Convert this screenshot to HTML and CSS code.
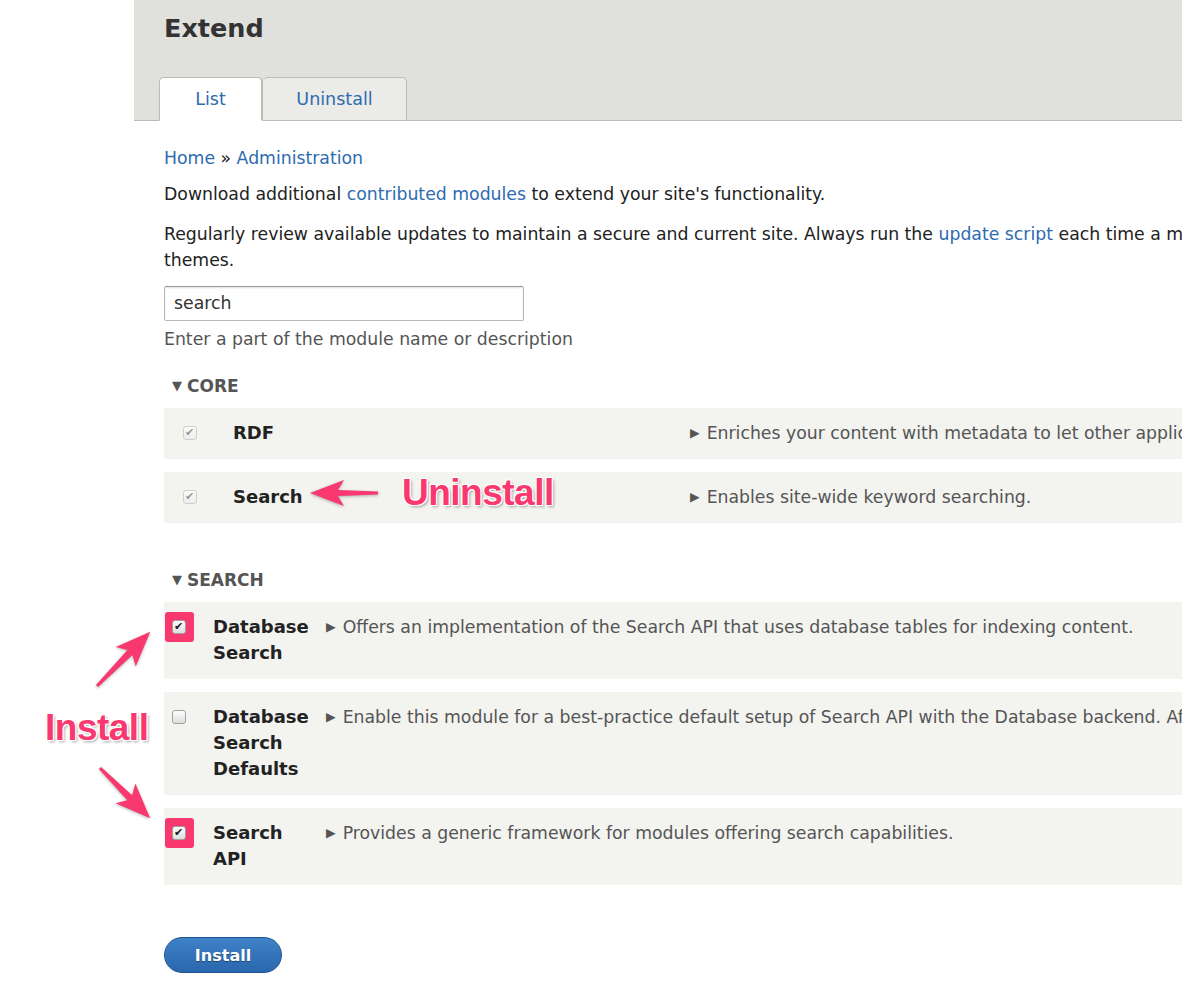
FILE: index.html
```html
<!DOCTYPE html>
<html lang="en">
<head>
<meta charset="utf-8">
<title>Extend</title>
<link rel="stylesheet" href="styles.css">
</head>
<body>
<div class="page">
  <header class="header">
    <h1 class="title">Extend</h1>
    <nav class="tabs">
      <a class="tab active" href="#">List</a>
      <a class="tab" href="#">Uninstall</a>
    </nav>
  </header>
  <main class="content">
    <div class="breadcrumb"><a href="#">Home</a> » <a href="#">Administration</a></div>
    <p class="text">Download additional <a href="#">contributed modules</a> to extend your site's functionality.</p>
    <p class="text wide">Regularly review available updates to maintain a secure and current site. Always run the <a href="#">update script</a> each time a module is updated, for both modules and themes.</p>
    <div class="filter">
      <div class="input">search</div>
      <div class="hint">Enter a part of the module name or description</div>
    </div>

    <section class="group">
      <h2 class="group-title"><span class="tri">▼</span>CORE</h2>
      <div class="rows core">
        <div class="row">
          <div class="cb-cell"><span class="cb disabled checked"></span></div>
          <div class="name">RDF</div>
          <div class="desc"><span class="arrow">▶</span>Enriches your content with metadata to let other applications (e.g. search engines, aggregators) better understand its relationships and attributes.</div>
        </div>
        <div class="row">
          <div class="cb-cell"><span class="cb disabled checked"></span></div>
          <div class="name">Search</div>
          <div class="desc"><span class="arrow">▶</span>Enables site-wide keyword searching.</div>
        </div>
      </div>
    </section>

    <section class="group">
      <h2 class="group-title"><span class="tri">▼</span>SEARCH</h2>
      <div class="rows search">
        <div class="row">
          <div class="cb-cell"><span class="mark"><span class="cb checked"></span></span></div>
          <div class="name">Database Search</div>
          <div class="desc"><span class="arrow">▶</span>Offers an implementation of the Search API that uses database tables for indexing content.</div>
        </div>
        <div class="row">
          <div class="cb-cell"><span class="cb"></span></div>
          <div class="name">Database Search Defaults</div>
          <div class="desc"><span class="arrow">▶</span>Enable this module for a best-practice default setup of Search API with the Database backend. After installation it can be safely uninstalled.</div>
        </div>
        <div class="row">
          <div class="cb-cell"><span class="mark"><span class="cb checked"></span></span></div>
          <div class="name">Search API</div>
          <div class="desc"><span class="arrow">▶</span>Provides a generic framework for modules offering search capabilities.</div>
        </div>
      </div>
    </section>

    <div class="actions"><button class="btn" type="button">Install</button></div>
  </main>
</div>

<svg class="annotations" width="1182" height="1006" viewBox="0 0 1182 1006" aria-hidden="true">
  <g fill="#f8386f">
    <g transform="translate(378 493) rotate(180)">
      <path d="M0,-1.5 L40,-3 L34,-13 L68,0 L34,13 L40,3 L0,1.5 Z"/>
    </g>
    <g transform="translate(97 686) rotate(-45.5)">
      <path d="M0,-1.5 L47,-3.5 L41,-14 L76,0 L41,14 L47,3.5 L0,1.5 Z"/>
    </g>
    <g transform="translate(100 768) rotate(45)">
      <path d="M0,-1.5 L42,-3.5 L36,-14 L71,0 L36,14 L42,3.5 L0,1.5 Z"/>
    </g>
  </g>
</svg>
<div class="note note-uninstall">Uninstall</div>
<div class="note note-install">Install</div>
</body>
</html>
```

FILE: styles.css
```css
html, body {
  margin: 0;
  padding: 0;
}
body {
  width: 1182px;
  height: 1006px;
  overflow: hidden;
  position: relative;
  background: #fff;
  font-family: "DejaVu Sans", "Liberation Sans", sans-serif;
  font-size: 17.3px;
  color: #222;
}
a {
  color: #2e6bb0;
  text-decoration: none;
}
.page {
  margin-left: 134px;
  width: 1500px;
}
.header {
  background: #e0e0dc;
  border-bottom: 1px solid #bdbdb8;
  height: 121px;
  box-sizing: border-box;
  padding-left: 30px;
  display: flex;
  flex-direction: column;
  justify-content: space-between;
}
.title {
  margin: 0;
  padding-top: 10px;
  font-size: 25.5px;
  line-height: 36px;
  font-weight: bold;
  color: #333;
}
.tabs {
  display: flex;
  margin-left: -5px;
  margin-bottom: -1px;
}
.tab {
  display: flex;
  align-items: center;
  justify-content: center;
  height: 44px;
  box-sizing: border-box;
  border: 1px solid #bdbdb8;
  border-radius: 5px 5px 0 0;
  background: #ebebe8;
  font-size: 17.5px;
  color: #2e6bb0;
}
.tab.active {
  width: 104px;
  background: #fff;
  border-bottom-color: #fff;
  border-width: 1px 2px 1px 1px;
}
.tab + .tab {
  width: 144px;
  border-left: none;
}
.content {
  padding-left: 30px;
  width: 1380px;
}
.breadcrumb {
  margin-top: 24px;
  line-height: 26px;
}
.text {
  margin: 10px 0 0;
  line-height: 26px;
}
.text.wide {
  margin-top: 14px;
}
.filter {
  margin-top: 13px;
}
.input {
  width: 360px;
  height: 35px;
  box-sizing: border-box;
  border: 1px solid #b8b8b4;
  border-top-color: #9a9a96;
  border-radius: 2px;
  box-shadow: inset 0 1px 2px rgba(0, 0, 0, 0.12);
  padding: 0 9px;
  line-height: 33px;
  font-size: 17.3px;
  color: #333;
}
.hint {
  line-height: 26px;
  margin-top: 5px;
  color: #555;
}
.group {
  margin-top: 21px;
}
.group + .group {
  margin-top: 44px;
}
.group-title {
  margin: 0 0 9px 8px;
  font-size: 17px;
  line-height: 26px;
  font-weight: bold;
  color: #555;
}
.tri {
  display: inline-block;
  font-size: 13px;
  line-height: 1;
  margin-right: 5px;
  vertical-align: 2px;
}
.rows {
  display: flex;
  flex-direction: column;
  gap: 13px;
}
.row {
  display: grid;
  background: #f3f3f0;
  padding: 12px 0 13px;
  line-height: 26px;
}
.core .row {
  grid-template-columns: 69px 457px 1fr;
}
.search .row {
  grid-template-columns: 49px 113px 1fr;
}
.cb-cell {
  display: flex;
  justify-content: flex-start;
  align-items: flex-start;
  padding-top: 6px;
}
.core .cb-cell {
  padding-left: 19px;
}
.search .cb-cell {
  padding-left: 1px;
}
.cb {
  display: block;
  width: 14px;
  height: 14px;
  box-sizing: border-box;
  border: 1px solid #a0a0a0;
  border-radius: 3px;
  background: linear-gradient(#fdfdfd, #dedede);
  position: relative;
}
.search .cb {
  margin-left: 7px;
}
.cb.checked::after {
  content: "✔";
  position: absolute;
  left: 1px;
  top: -5px;
  font-size: 11px;
  line-height: 22px;
  color: #222;
}
.cb.disabled {
  border-color: #cfcfcf;
  background: linear-gradient(#fafafa, #ededed);
}
.cb.disabled::after {
  color: #9a9a9a;
}
.mark {
  display: block;
  width: 29px;
  height: 30px;
  box-sizing: border-box;
  margin-top: -8px;
  background: #f8386f;
  border-radius: 3px;
  padding-top: 8px;
}
.mark .cb {
  margin-left: 7px;
}
.name {
  font-weight: bold;
  font-size: 18px;
  color: #222;
}
.search .name {
  padding-right: 10px;
}
.desc {
  color: #555;
  white-space: nowrap;
}
.arrow {
  display: inline-block;
  font-size: 12.5px;
  line-height: 1;
  margin-right: 7px;
  vertical-align: 2px;
}
.actions {
  margin-top: 52px;
}
.btn {
  width: 118px;
  height: 36px;
  border: 1px solid #1f5592;
  border-radius: 18px;
  background: linear-gradient(#3f82c8, #2a66ad);
  color: #fff;
  font-family: "DejaVu Sans", sans-serif;
  font-weight: bold;
  font-size: 16px;
  text-shadow: 0 1px 1px rgba(0, 0, 0, 0.4);
  padding: 0;
}
.annotations {
  position: absolute;
  left: 0;
  top: 0;
  pointer-events: none;
  filter: drop-shadow(0 1px 1.5px rgba(0, 0, 0, 0.3));
}
.note {
  position: absolute;
  font-family: "Liberation Sans", Arial, sans-serif;
  font-weight: bold;
  font-size: 37px;
  line-height: 40px;
  color: #f8386f;
  letter-spacing: -0.5px;
  text-shadow: 0 0 1px #fff, 0 0 2px #fff, 1px 1px 0 #fff, -1px -1px 0 #fff, 1px -1px 0 #fff, -1px 1px 0 #fff, 2px 2px 3px rgba(0, 0, 0, 0.35);
}
.note-uninstall {
  left: 402px;
  top: 473px;
}
.note-install {
  left: 45px;
  top: 708px;
}
```
